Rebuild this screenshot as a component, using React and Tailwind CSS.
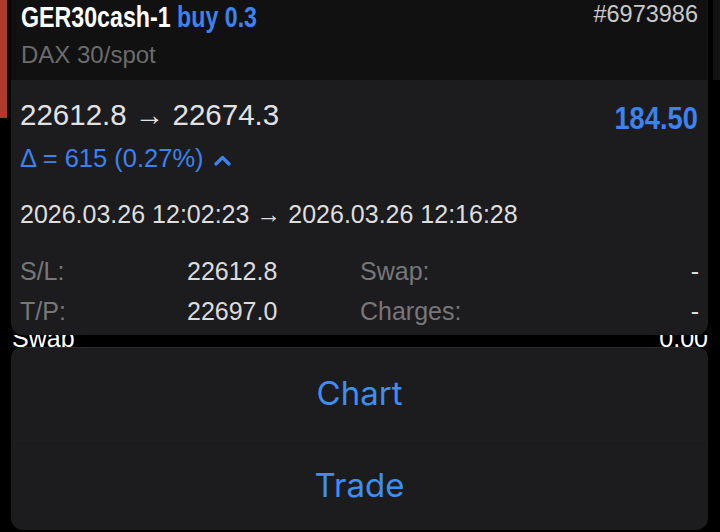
import React from "react";

const rows = [
  { label: "S/L:", value: "22612.8", label2: "Swap:", value2: "-" },
  { label: "T/P:", value: "22697.0", label2: "Charges:", value2: "-" },
];

const ChevronUp = () => (
  <svg width="17" height="11" viewBox="0 0 17 11" className="ml-[10px] mt-[4px]">
    <path d="M2 9 L8.5 2.5 L15 9" fill="none" stroke="#3d82ee" strokeWidth="3.2" strokeLinecap="round" strokeLinejoin="round" />
  </svg>
);

export default function App() {
  return (
    <div className="w-[720px] h-[532px] bg-black overflow-hidden flex font-['Liberation_Sans',Arial,sans-serif]">
      {/* left edge of the list behind */}
      <div className="w-[11px] shrink-0">
        <div className="w-[7px] h-[118px] bg-[#ad3a2c]" />
      </div>

      <div className="w-[697px] shrink-0 flex flex-col">
        {/* header */}
        <div className="h-[80px] bg-[#111111] px-[10px]">
          <div className="flex justify-between items-start">
            <div className="h-[34px] leading-[34px] whitespace-nowrap">
              <span className="inline-block origin-left scale-x-[0.8] text-[29px] font-bold">
                <span className="text-white">GER30cash-1</span>
                <span className="text-[#3d82ee]"> buy 0.3</span>
              </span>
            </div>
            <div className="text-[23.5px] leading-[28px] text-[#c9c9c9]">#6973986</div>
          </div>
          <div className="mt-[6px] text-[24px] leading-[30px] text-[#6c6c6c]">DAX 30/spot</div>
        </div>

        {/* trade card */}
        <div className="relative z-10 h-[255px] bg-[#1c1c1e] rounded-b-[12px] px-[9px] pt-[18px]">
          <div className="flex justify-between items-start">
            <div className="text-[29.5px] leading-[34px] text-[#e2e2e2]">22612.8 → 22674.3</div>
            <div className="mt-[4px] mr-[1px] text-[31px] leading-[34px] font-bold text-[#3d82ee] origin-right scale-x-[0.88]">184.50</div>
          </div>
          <div className="mt-[7px] flex items-center text-[25.5px] leading-[30px] text-[#3d82ee]">
            <span>Δ = 615 (0.27%)</span>
            <ChevronUp />
          </div>
          <div className="mt-[26px] text-[25px] leading-[30px] text-[#dedede]">2026.03.26 12:02:23 → 2026.03.26 12:16:28</div>

          <div className="mt-[27px] flex flex-col gap-[10px]">
            {rows.map((r) => (
              <div key={r.label} className="flex items-center text-[25px] leading-[30px]">
                <div className="w-[167px] text-[#777779]">{r.label}</div>
                <div className="w-[173px] text-[#dcdcdc]">{r.value}</div>
                <div className="flex-1 text-[#777779]">{r.label2}</div>
                <div className="text-[#dcdcdc]">{r.value2}</div>
              </div>
            ))}
          </div>
        </div>

        {/* row of the list peeking out below the card */}
        <div className="h-[12px] overflow-hidden flex justify-between items-end pl-[1px] text-[25px] leading-none text-white">
          <span className="mb-[-4px]">Swap</span>
          <span className="mb-[-4px]">0.00</span>
        </div>

        {/* action sheet */}
        <div className="h-[183px] rounded-[12px] bg-[#1c1c1e] border-t border-[#2c2c2e] flex flex-col font-['Inter',sans-serif]">
          <button className="h-[92px] flex items-center justify-center text-[33px] text-[#3f8ef3]">Chart</button>
          <div className="h-px bg-[#1f1f21] mx-[1px]" />
          <button className="flex-1 flex items-center justify-center text-[33px] text-[#3f8ef3]">Trade</button>
        </div>
      </div>

      <div className="flex-1">
        <div className="ml-[5px] h-[80px] bg-[#131313]" />
      </div>
    </div>
  );
}
